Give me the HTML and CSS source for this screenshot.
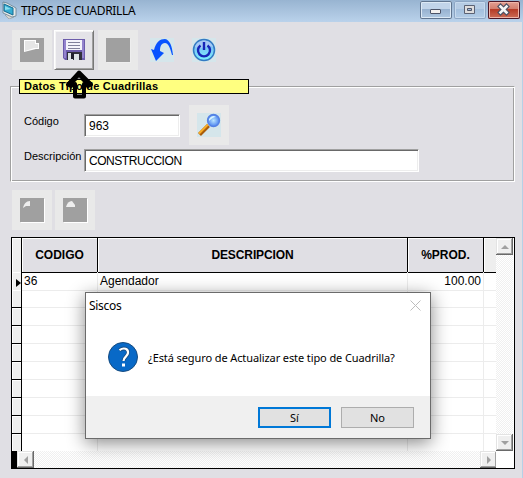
FILE: index.html
```html
<!DOCTYPE html>
<html lang="es">
<head>
<meta charset="utf-8">
<title>Tipos de cuadrilla</title>
<link rel="stylesheet" href="styles.css">
</head>
<body>
<main class="window">
  <header class="titlebar">
    <svg class="app-icon" width="16" height="18" viewBox="0 0 16 18"><path d="M4 14l4-1 5 3-5 2z" fill="#d8d6d0" stroke="#8a9297" stroke-width=".6"/><path d="M2 1l4 1 9 5v8l-4 1-9-4z" fill="#e4e8e8" stroke="#67808f" stroke-width=".8"/><path d="M3 3l9 4v7l-9-4z" fill="#35acd2" stroke="#166b91"/><path d="M4 5l6 3-6 1z" fill="#89dff0"/></svg>
    <h1>TIPOS DE CUADRILLA</h1>
    <div class="controls">
      <button class="ctl"><svg width="32" height="18" viewBox="0 0 32 18"><rect x="10.5" y="8.5" width="10" height="4" rx=".5" fill="#f3f1ef" stroke="#4c5468"/></svg></button>
      <button class="ctl ctl-disabled"><svg width="32" height="18" viewBox="0 0 32 18"><path d="M10.500 4.500h10v8h-10z" fill="#dedddd" stroke="#5b6274"/><path d="M13.500 7.500h4v2h-4z" fill="#a5bbdb" stroke="#4c5468"/></svg></button>
      <button class="ctl ctl-close"><svg width="32" height="18" viewBox="0 0 32 18"><path d="M12.500 5.500l6 6m0-6l-6 6" stroke="#4b5063" stroke-width="4.800" stroke-linecap="square"/><path d="M12.500 5.500l6 6m0-6l-6 6" stroke="#f5f5f5" stroke-width="2.600" stroke-linecap="square"/></svg></button>
    </div>
  </header>
  <nav class="toolbar">
    <button class="tool"><svg width="26" height="26" viewBox="0 0 26 26"><path d="M1 1h24v24H1z" fill="#a0a0a0"/><path d="M5 3h12v3h3v6h-3L5 15z" fill="#fff"/><path d="M6 4h10v3h3v4h-4L6 14z" fill="#e6e6e6"/></svg></button>
    <button class="tool tool-active"><svg width="24" height="24" viewBox="0 0 24 24"><path d="M1 1h22v21H3l-2-2z" fill="#6c5cab"/><path d="M2 2h2v18H2zm18 0h2v18h-2z" fill="#9383cd"/><path d="M4 2h16v10H4z" fill="#f3f3fa"/><path d="M6 4.500h12M6 7.500h12M6 10.500h12" stroke="#80809a"/><path d="M5 14h15v8H5z" fill="#30303c"/><path d="M6 15h5v7H6zm6 1h5v6h-5z" fill="#dce3e6"/><path d="M9 15h3v6H9z" fill="#20202d"/></svg></button>
    <button class="tool tool-third"><svg width="26" height="26" viewBox="0 0 26 26"><path d="M2 2h24v24H2z" fill="#eee"/><path d="M1 1h24v24H1z" fill="#a0a0a0"/></svg></button>
    <button class="tool tool-flat"><svg width="24" height="24" viewBox="0 0 24 24"><path fill="#d5e6eb" d="M0 0h24v24H0z"/><path d="M1 11l3 1C6 4 10 1 15 1c5 1 7 7 8 16h-1C20 9 18 5 15 5c-4 0-5 4-5 8l4 2-8 8z" fill="#0753ff"/></svg></button>
    <button class="tool tool-flat"><svg width="24" height="24" viewBox="0 0 24 24"><defs><linearGradient id="power" x2="0" y2="1"><stop stop-color="#7aa8ee"/><stop offset="1" stop-color="#7cf2ff"/></linearGradient></defs><path fill="#d5e6eb" d="M0 0h24v24H0z"/><circle cx="12" cy="12" r="10.500" fill="url(#power)" stroke="#337ac3" stroke-width="1.500"/><path d="M3 9c2-8 15-9 18 0-5-3-12 4-18 0" fill="#b4cff5" opacity=".75"/><path d="M8.500 7.500a6 6 0 1 0 7 0" fill="none" stroke="#1725b7" stroke-width="2.400"/><path d="M12 4v8" stroke="#1725b7" stroke-width="2.400"/></svg></button>
  </nav>
  <section class="details">
    <h2>Datos Tipo de Cuadrillas</h2>
    <div class="form-row">
      <label class="field-label" for="code">Código</label><input id="code" class="field field-code" value="963">
      <button class="search"><svg width="24" height="24" viewBox="0 0 24 24"><defs><radialGradient id="lens"><stop stop-color="#b9e5ff"/><stop offset="1" stop-color="#4b83ef"/></radialGradient></defs><path fill="#d5e6eb" d="M0 0h24v24H0z"/><path d="M2.500 21.500l9-9" stroke="#a85c0b" stroke-width="4"/><path d="M2 20.500l9-9" stroke="#f9ad25" stroke-width="2"/><circle cx="16.500" cy="7.500" r="6" fill="url(#lens)" stroke="#5581e3" stroke-width="1.300"/><path d="M12 6q3-5 7-2-3 0-7 4z" fill="#d7f4ff"/></svg></button>
    </div>
    <div class="form-row form-description">
      <label class="field-label" for="desc">Descripción</label><input id="desc" class="field field-desc" value="CONSTRUCCION">
    </div>
    <svg class="pointer" width="28" height="30" viewBox="0 0 28 30"><path d="M14 2.500L3 14.500l3 1.500 4-2v12.500h9V14l4 2 3-1.500z" fill="none" stroke="#000" stroke-width="4" stroke-linejoin="round"/><path d="M13 2h2l11 11-3 4-9-9-9 9-3-4z"/><path d="M12 8.500l2-1 2 1z" fill="#aaa"/></svg>
  </section>
  <div class="row-tools">
    <button class="tool"><svg width="26" height="26" viewBox="0 0 26 26"><path d="M2 2h24v24H2z" fill="#fff"/><path d="M1 1h24v24H1z" fill="#a0a0a0"/><path d="M4 11c1-4 3-7 7-7v5H7z" fill="#eee"/></svg></button>
    <button class="tool"><svg width="26" height="26" viewBox="0 0 26 26"><path d="M2 2h24v24H2z" fill="#fff"/><path d="M1 1h24v24H1z" fill="#a0a0a0"/><path d="M4 10c1-4 3-6 6-6l3 4v2H8z" fill="#eee"/></svg></button>
  </div>
  <section class="datagrid">
    <div class="grid-body">
      <div class="record head"><span class="marker"></span><b>CODIGO</b><b>DESCRIPCION</b><b>%PROD.</b><span class="filler"></span></div>
      <div class="record"><span class="marker current"></span><span>36</span><span>Agendador</span><span class="number">100.00</span><span></span></div>
      <div class="record"><span class="marker"></span><span></span><span></span><span></span><span></span></div>
      <div class="record"><span class="marker"></span><span></span><span></span><span></span><span></span></div>
      <div class="record"><span class="marker"></span><span></span><span></span><span></span><span></span></div>
      <div class="record"><span class="marker"></span><span></span><span></span><span></span><span></span></div>
      <div class="record"><span class="marker"></span><span></span><span></span><span></span><span></span></div>
      <div class="record"><span class="marker"></span><span></span><span></span><span></span><span></span></div>
      <div class="record"><span class="marker"></span><span></span><span></span><span></span><span></span></div>
      <div class="record"><span class="marker"></span><span></span><span></span><span></span><span></span></div>
      <div class="record last"><span class="marker"></span><span></span><span></span><span></span><span></span></div>
    </div>
    <div class="scroll vertical"><button class="arrow"><svg width="8" height="4"><path d="M0 4l4-4 4 4z"/></svg></button><button class="arrow"><svg width="8" height="4"><path d="M0 0h8L4 4z"/></svg></button></div>
    <div class="scroll horizontal"><button class="arrow"><svg width="4" height="8"><path d="M4 0v8L0 4z"/></svg></button><button class="arrow"><svg width="4" height="8"><path d="M0 0v8l4-4z"/></svg></button></div>
    <span class="corner"></span>
  </section>
  <section class="dialog" role="dialog">
    <header class="dialog-title"><h3>Siscos</h3><svg width="11" height="11" viewBox="0 0 11 11"><path d="M.5.5l10 10m0-10l-10 10" stroke="#bdbdbd"/></svg></header>
    <div class="message">
      <svg width="30" height="30" viewBox="0 0 30 30"><circle cx="15" cy="15" r="14.500" fill="#0869c7" stroke="#174c80"/><path d="M11.500 8.200C16 4.800 20.500 7 20 11c-.4 3.500-4.500 4-4.500 8" fill="none" stroke="#174c80" stroke-width="3.800"/><path d="M11.500 8.200C16 4.800 20.500 7 20 11c-.4 3.500-4.500 4-4.500 8" fill="none" stroke="#fff" stroke-width="2.200"/><path d="M14 21.500h3v3h-3z" fill="#fff"/></svg>
      <p>¿Está seguro de Actualizar este tipo de Cuadrilla?</p>
    </div>
    <footer><button class="choice primary">Sí</button><button class="choice">No</button></footer>
  </section>
</main>
</body>
</html>
```
FILE: styles.css
```css
* { box-sizing: border-box; }
body { margin: 0; font-family: "Liberation Sans", sans-serif; color: #000; overflow: hidden; }
button { margin: 0; padding: 0; border: 0; font: inherit; }
svg { display: block; flex: none; }
h1, h2, h3, p { margin: 0; font-weight: normal; }
.window { position: relative; width: 523px; height: 478px; background: #e0dfe4; border-right: 1px solid #b7d0e6; }
.titlebar { display: flex; width: 523px; height: 22px; background: linear-gradient(#98b4d1, #bad2eb); }
.app-icon { margin: 1px 0 0 1px; }
.titlebar h1 { width: 360px; margin-left: 4px; font: 12px/21px "Noto Sans", sans-serif; letter-spacing: -.32px; white-space: nowrap; }
.controls { display: flex; gap: 2px; margin: 1px 3px 0 auto; }
.ctl { width: 32px; height: 18px; border-radius: 2px; background: linear-gradient(#c1d4e9 0 44%, #96b1cf 45%, #b2cbe4); box-shadow: inset 0 0 0 1px #60758f, inset 0 0 0 2px #dce9f5; }
.ctl-disabled { background: linear-gradient(#b6cce4 0 44%, #a3bfdd 45%, #b5cee8); box-shadow: inset 0 0 0 1px #8da6c4, inset 0 0 0 2px #c7daed; }
.ctl-close { background: linear-gradient(#e5a497, #d27d6d 44%, #b53a25 45%, #cf715b); box-shadow: inset 0 0 0 1px #4c1726, inset 0 0 0 2px #efb5a9; }
.toolbar { display: flex; gap: 3px; padding: 8px 0 0 12px; height: 64px; }
.tool { display: flex; align-items: center; justify-content: center; width: 40px; height: 40px; background: #e9e9e9; }
.tool-active { background: #e4e3e8; margin-left: -1px; border: 1px solid; border-color: #fff #777 #777 #fff; box-shadow: inset 1px 1px #f5f5f5, inset -1px -1px #a0a0a0; }
.tool-third { margin-left: 1px; }
.tool-flat { background: transparent; }
.tool-flat + .tool-flat { margin-left: -1px; }
.tool-third + .tool-flat { margin-left: 1px; }
.details { position: relative; width: 505px; height: 96px; margin-left: 10px; border: 1px solid #a0a0a0; border-right-color: #fff; border-bottom-color: #fff; box-shadow: inset 1px 1px #fff, inset -1px -1px #a0a0a0; }
.details h2 { position: absolute; left: 8px; top: -8px; width: 230px; height: 15px; padding-left: 4px; background: #ffff80; border: 1px solid #000; font: bold 11px/13px "Liberation Sans", sans-serif; letter-spacing: .23px; }
.form-row { display: flex; height: 44px; padding: 18px 0 0 13px; }
.form-description { height: 25px; padding-top: 0; margin-top: 18px; }
.field-label { width: 60px; padding-top: 1px; font: 11px/13px "Liberation Sans", sans-serif; white-space: nowrap; }
.form-row:first-of-type .field-label { padding-top: 10px; }
.field { height: 23px; padding: 1px 0 0 4px; background: #fff; border: 1px solid; border-color: #a0a0a0 #fff #fff #a0a0a0; box-shadow: inset 1px 1px #696969, inset -1px -1px #ededed; font: 12px "Liberation Sans", sans-serif; outline: 0; border-radius: 0; }
.field-code { width: 96px; margin-top: 9px; }
.field-desc { width: 335px; letter-spacing: -.45px; }
.search { display: flex; align-items: center; justify-content: center; width: 40px; height: 40px; margin-left: 9px; background: #e9e9e9; }
.pointer { position: absolute; left: 54px; top: -17px; }
.row-tools { display: flex; gap: 3px; margin: 8px 0 7px 12px; }
.datagrid { display: grid; grid-template-columns: 484px 17px 1px; grid-template-rows: 213px 17px; width: 504px; height: 232px; margin-left: 11px; border: 1px solid #000; background: #fff; }
.grid-body { grid-column: 1; width: 484px; }
.record { display: grid; grid-template-columns: 10px 76px 310px 76px 12px; height: 18px; font-size: 12px; line-height: 18px; }
.record > * { border-right: 1px solid #ececec; border-bottom: 1px solid #ececec; }
.record > :last-child { border-right: 0; }
.record > span { padding-left: 2px; }
.record .marker { background: #efefef; border-color: #000; padding: 0; box-shadow: inset 1px 1px #fff; }
.head { height: 34px; line-height: 34px; }
.record.head > * { border-color: #000; background: #e0dfe4; box-shadow: inset 1px 1px #fff; text-align: center; }
.record.head .marker { background: #eee; }
.record.head .filler { background: #eee; }
.head b:nth-child(3) { letter-spacing: -.1px; }
.number { text-align: right; padding-right: 2px; }
.current { display: flex; align-items: center; justify-content: flex-end; }
.current::before { content: ""; border: 4px solid transparent; border-left: 5px solid #000; border-right: 0; margin-top: 4px; }
.last { height: 17px; }
.last > span { border-bottom: 0; }
.scroll { display: flex; justify-content: space-between; background: repeating-conic-gradient(#f0f0f0 0 25%, #fff 0 50%) 0 0 / 2px 2px; }
.vertical { flex-direction: column; height: 213px; }
.horizontal { grid-column: 1; width: 485px; border-left: 5px solid #000; }
.corner { background: #fff; }
.arrow { display: flex; align-items: center; justify-content: center; width: 17px; height: 17px; background: #efefef; box-shadow: inset -1px -1px #696969, inset 1px 1px #e3e3e3, inset -2px -2px #a0a0a0, inset 2px 2px #fff; }
.arrow svg { fill: #a0a0a0; }
.dialog { position: absolute; left: 85px; top: 292px; width: 346px; height: 147px; background: #fff; border: 1px solid #6b6b6b; box-shadow: 0 4px 17px #0007; font-family: "Noto Sans", sans-serif; }
.dialog-title { display: flex; justify-content: space-between; padding: 6px 9px 0 3px; height: 30px; }
.dialog-title h3 { font-size: 12px; line-height: 13px; letter-spacing: -.3px; }
.dialog-title svg { margin-top: 1px; }
.message { display: flex; gap: 10px; height: 73px; padding: 19px 0 0 22px; }
.message p { padding-top: 7px; font-size: 11px; line-height: 17px; letter-spacing: -.1px; white-space: nowrap; }
.dialog footer { display: flex; justify-content: flex-end; gap: 10px; height: 42px; padding: 11px 16px 0; background: #f0f0f0; }
.choice { width: 73px; height: 21px; background: #e1e1e1; border: 1px solid #adadad; font-size: 11px; line-height: 17px; }
.primary { border: 2px solid #0078d7; }
```
